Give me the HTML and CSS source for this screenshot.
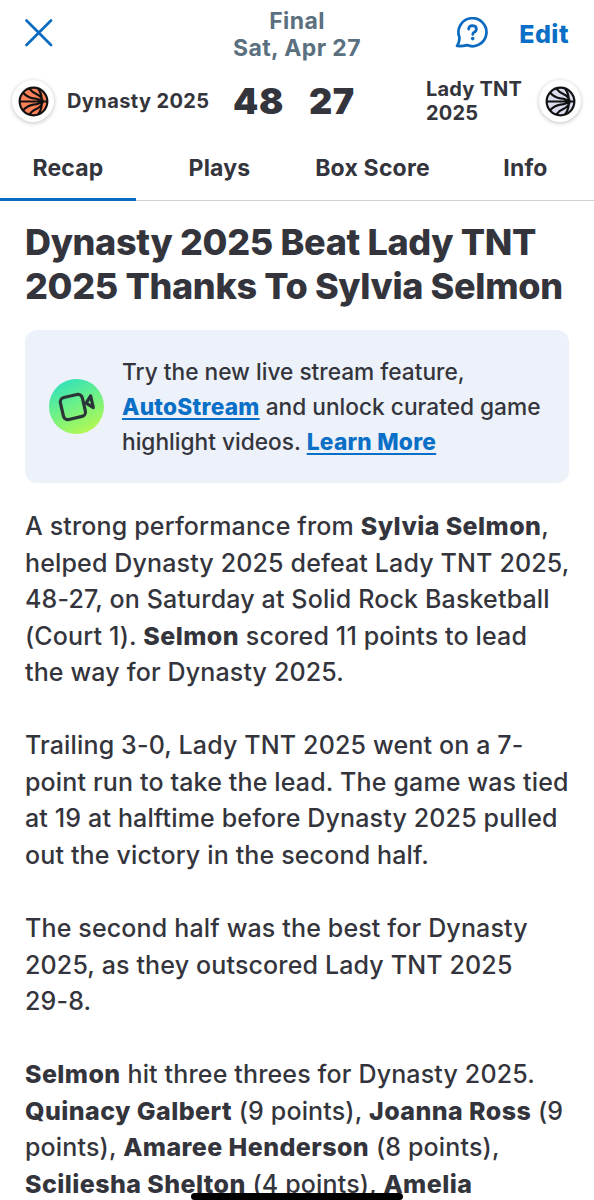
FILE: index.html
```
<!DOCTYPE html>
<html lang="en">
<head>
    <meta charset="UTF-8">
    <meta name="viewport" content="width=device-width, initial-scale=1.0">
    <title>Game Recap</title>
    <link rel="stylesheet" href="styles.css">
</head>
<body>

    <!-- Shared basketball outline -->
    <svg width="0" height="0" class="defs">
        <symbol id="ball" viewBox="0 0 30 30">
            <circle cx="15" cy="15" r="13.4"/>
            <path d="M1.6 15H28.4M5 6.500Q9 11 15 12Q21 12.500 22.500 15Q21 17.500 15 18Q9 19 5 23.500M11 2.500Q14 6.500 19 8.500Q23 10.500 24 15Q23 19.500 19 21.500Q14 23.500 11 27.500M19.500 2.500Q24 9 22.500 15Q24 21 19.500 27.500" fill="none"/>
        </symbol>
    </svg>

    <header class="header">
        <div class="topbar">
            <button class="close" aria-label="Close">
                <svg width="28" height="28" viewBox="0 0 28 28"><path d="M1.500 1.500L26 26M26 1.500L1.500 26"/></svg>
            </button>
            <div class="status">Final<br>Sat, Apr 27</div>
            <div class="actions">
                <svg class="help" width="34" height="32" viewBox="0 0 34 32">
                    <path d="M4.300 20A14 14 0 1 1 12 28.100Q7 29.500 2 29Q4.800 25.500 4.300 20Z"/>
                    <path d="M13.600 12.200Q13.800 8.700 17.600 8.700Q21.400 8.900 21.400 12.200Q21.200 14.500 18.800 15.500Q17.700 16 17.700 17.500"/>
                    <circle cx="17.700" cy="21.600" r="1.800"/>
                </svg>
                <a class="edit">Edit</a>
            </div>
        </div>

        <div class="scoreboard">
            <div class="logo home"><svg width="31" height="31"><use href="#ball"/></svg></div>
            <div class="team team-home">Dynasty 2025</div>
            <div class="score score-home">48</div>
            <div class="score score-away">27</div>
            <div class="team team-away">Lady TNT<br>2025</div>
            <div class="logo away"><svg width="31" height="31"><use href="#ball"/></svg></div>
        </div>

        <nav class="tabs">
            <a class="tab active">Recap</a>
            <a class="tab">Plays</a>
            <a class="tab">Box Score</a>
            <a class="tab">Info</a>
        </nav>
    </header>

    <main class="content">
        <h1>Dynasty 2025 Beat Lady TNT<br>2025 Thanks To Sylvia Selmon</h1>

        <div class="promo">
            <div class="promo-icon">
                <svg width="55" height="55" viewBox="0 0 55 55">
                    <g transform="rotate(-13 27 27)">
                        <rect x="12.500" y="16" width="22.500" height="22.500" rx="4.500"/>
                        <path d="M37.500 26.500L43.500 20.500V32.500Z"/>
                    </g>
                </svg>
            </div>
            <p>Try the new live stream feature,<br><a>AutoStream</a> and unlock curated game<br>highlight videos. <a>Learn More</a></p>
        </div>

        <article class="recap">
            <p>A strong performance from <b>Sylvia Selmon</b>,<br>helped Dynasty 2025 defeat Lady TNT 2025,<br>48-27, on Saturday at Solid Rock Basketball<br>(Court 1). <b>Selmon</b> scored 11 points to lead<br>the way for Dynasty 2025.</p>
            <p>Trailing 3-0, Lady TNT 2025 went on a 7-<br>point run to take the lead. The game was tied<br>at 19 at halftime before Dynasty 2025 pulled<br>out the victory in the second half.</p>
            <p>The second half was the best for Dynasty<br>2025, as they outscored Lady TNT 2025<br>29-8.</p>
            <p><b>Selmon</b> hit three threes for Dynasty 2025.<br><b>Quinacy Galbert</b> (9 points), <b>Joanna Ross</b> (9<br>points), <b>Amaree Henderson</b> (8 points),<br><b>Sciliesha Shelton</b> (4 points), <b>Amelia</b></p>
        </article>
    </main>

    <div class="home-indicator"></div>

</body>
</html>
```
FILE: styles.css
```
* {
    box-sizing: border-box;
}
body {
    font-family: 'Inter', 'Liberation Sans', sans-serif;
    background: #fff;
    color: #34353c;
    margin: 0;
    height: 1200px;
    overflow: hidden;
    white-space: nowrap;
}
h1, p {
    margin: 0;
}
.defs {
    display: block;
}
.header {
    height: 201px;
}
.topbar {
    height: 68px;
    display: grid;
    grid-template-columns: 1fr auto 1fr;
    padding: 0 25px;
}
.close {
    justify-self: start;
    margin-top: 19px;
    height: 28px;
    padding: 0;
    border: none;
    background: none;
}
.close svg, .help {
    display: block;
    fill: none;
    stroke: #0a6abf;
    stroke-width: 2.7;
    stroke-linecap: round;
    stroke-linejoin: round;
}
.status {
    padding-top: 8px;
    color: #5b707f;
    font-size: 23px;
    font-weight: 700;
    line-height: 27px;
    letter-spacing: 0.4px;
    text-align: center;
}
.actions {
    display: flex;
    justify-content: flex-end;
    padding-top: 17px;
    gap: 30px;
}
.help circle {
    fill: #0a6abf;
    stroke: none;
}
.edit {
    color: #0a6fc6;
    font-size: 25px;
    font-weight: 800;
    line-height: 34px;
    letter-spacing: 0.5px;
}
.scoreboard {
    height: 66px;
    display: flex;
    align-items: center;
    padding: 0 13px 0 12px;
}
.logo {
    width: 42px;
    height: 42px;
    border-radius: 50%;
    background: #fff;
    box-shadow: 0 1px 4px rgba(0, 0, 0, 0.25);
    display: flex;
    align-items: center;
    justify-content: center;
}
.logo svg {
    stroke: #111;
    stroke-width: 2.1;
}
.home svg {
    fill: #ff8159;
}
.away svg {
    fill: #d9dcec;
}
.team {
    font-size: 20px;
    font-weight: 700;
    line-height: 24px;
    letter-spacing: 0.4px;
}
.team-home {
    margin-left: 13px;
    width: 166px;
}
.team-away {
    width: 113px;
    letter-spacing: 0.2px;
}
.score {
    font-size: 36px;
    font-weight: 900;
    letter-spacing: 0.6px;
}
.score-home {
    width: 76px;
}
.score-away {
    width: 117px;
}
.tabs {
    height: 67px;
    display: flex;
    border-bottom: 1px solid #cfd1d4;
}
.tab {
    height: 67px;
    padding-top: 20px;
    font-size: 23px;
    font-weight: 700;
    line-height: 28px;
    letter-spacing: 0.2px;
    text-align: center;
    flex: 0 0 136px;
}
.tab:nth-child(2) {
    flex-basis: 167px;
}
.tab:nth-child(3) {
    flex-basis: 139px;
}
.tab:nth-child(4) {
    flex-basis: 167px;
}
.tab.active {
    border-bottom: 3px solid #0a6abf;
}
.content {
    padding: 19px 25px 0;
}
h1 {
    font-size: 36px;
    font-weight: 800;
    line-height: 44px;
    letter-spacing: -0.34px;
}
.promo {
    margin-top: 22px;
    height: 153px;
    padding: 0 24px;
    border-radius: 12px;
    background: #ecf1fa;
    display: flex;
    align-items: center;
    gap: 18px;
}
.promo-icon {
    width: 55px;
    height: 55px;
    border-radius: 50%;
    background: linear-gradient(155deg, #2be0c0 5%, #6af08a 45%, #b5f850 90%);
}
.promo-icon svg {
    display: block;
    fill: none;
    stroke: #2b3438;
    stroke-width: 3.2;
    stroke-linejoin: round;
}
.promo p {
    font-size: 22.7px;
    font-weight: 500;
    line-height: 35px;
}
.promo a {
    color: #0a6fc6;
    font-weight: 800;
    letter-spacing: 0.25px;
    text-decoration: underline;
    text-decoration-thickness: 2px;
    text-underline-offset: 3px;
}
.recap {
    margin-top: 25px;
    font-size: 25px;
    font-weight: 500;
    line-height: 36.55px;
    letter-spacing: 0.15px;
}
.recap p {
    margin-bottom: 36.55px;
}
.recap b {
    font-weight: 800;
    letter-spacing: 0.42px;
}
.home-indicator {
    position: fixed;
    left: 191px;
    bottom: 0;
    width: 212px;
    height: 7px;
    border-radius: 4px;
    background: #000;
}
```
